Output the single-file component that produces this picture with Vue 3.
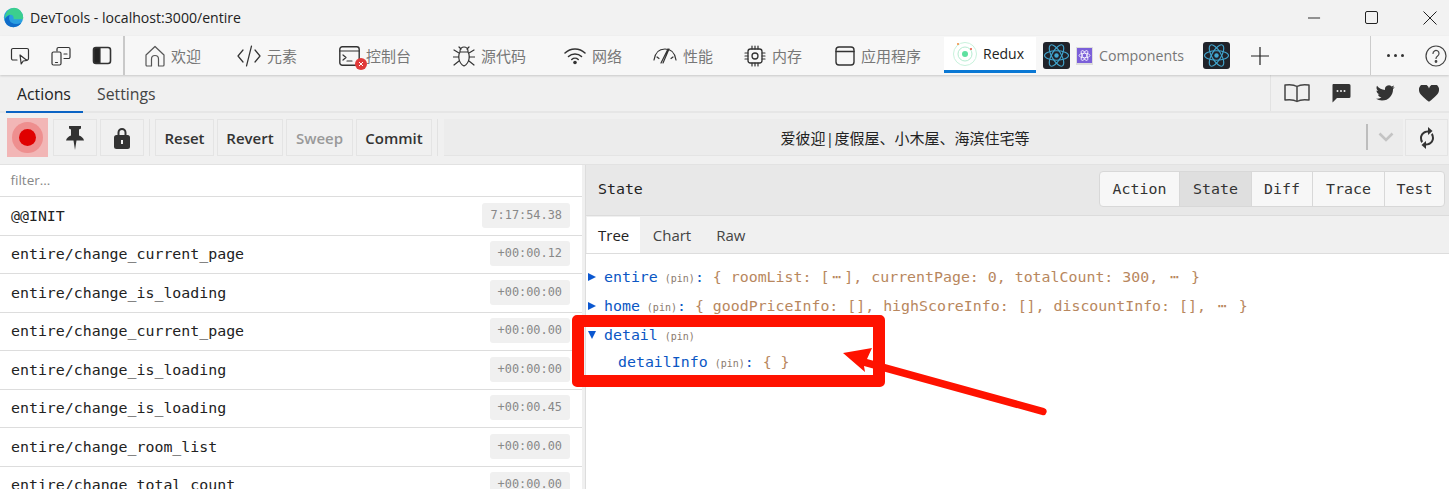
<script setup>
const tabs = [
  { id: 'home', label: '欢迎', w: 92 },
  { id: 'code', label: '元素', w: 102 },
  { id: 'console', label: '控制台', w: 114 },
  { id: 'bug', label: '源代码', w: 111 },
  { id: 'wifi', label: '网络', w: 89 },
  { id: 'gauge', label: '性能', w: 91 },
  { id: 'chip', label: '内存', w: 91 },
  { id: 'app', label: '应用程序', w: 109 }
]
const rows = [
  { name: '@@INIT', time: '7:17:54.38' },
  { name: 'entire/change_current_page', time: '+00:00.12' },
  { name: 'entire/change_is_loading', time: '+00:00:00' },
  { name: 'entire/change_current_page', time: '+00:00.00' },
  { name: 'entire/change_is_loading', time: '+00:00:00' },
  { name: 'entire/change_is_loading', time: '+00:00.45' },
  { name: 'entire/change_room_list', time: '+00:00.00' },
  { name: 'entire/change_total_count', time: '+00:00.00' }
]
const modes = [
  { label: 'Action', w: 79 },
  { label: 'State', w: 72, active: true },
  { label: 'Diff', w: 61 },
  { label: 'Trace', w: 72 },
  { label: 'Test', w: 60 }
]
</script>

<template>
  <div class="page">
    <header class="titlebar">
      <svg class="edge" viewBox="0 0 24 24" width="21" height="21">
        <circle cx="12" cy="12" r="11" fill="#2a9fe0" />
        <path d="M12 1A11 11 0 0 1 23 13v1H12c1-4-2-6-5-5-3 1-4 3-5 5C2 7 6 1 12 1z" fill="#3bcf8e" />
        <path d="M2 14c0 6 5 9 10 9 4 0 7-2 9-5-4 2-8 2-11 0-3-2-4-6-2-9-3 1-5 3-6 5z" fill="#0f6cc9" />
      </svg>
      <span class="title">DevTools - localhost:3000/entire</span>
      <div class="winbtns">
        <svg viewBox="0 0 14 14" width="14" height="14"><path d="M0 7h13" stroke="#222" stroke-width="1" fill="none" /></svg>
        <svg viewBox="0 0 14 14" width="14" height="14"><rect x=".5" y=".5" width="12" height="12" rx="1.5" stroke="#222" fill="none" /></svg>
        <svg viewBox="0 0 14 14" width="14" height="14"><path d="M.5.5l13 13M13.5.5l-13 13" stroke="#222" fill="none" /></svg>
      </div>
    </header>

    <nav class="tabbar">
      <div class="tools">
        <svg viewBox="0 0 20 20" width="20" height="20" class="ic"><path d="M7 14H3a1.5 1.5 0 0 1-1.500-1.500V4A1.500 1.500 0 0 1 3 2.500h14A1.500 1.500 0 0 1 18.500 4v8.500A1.500 1.500 0 0 1 17 14h-1" /><path d="M10 9l1.200 9 2-3 3.800-.5z" /></svg>
        <svg viewBox="0 0 20 20" width="20" height="20" class="ic"><path d="M6 5V3a1.500 1.500 0 0 1 1.500-1.500h10A1.500 1.500 0 0 1 19 3v8a1.500 1.500 0 0 1-1.500 1.500H13M13 8h3" /><rect x="1" y="6" width="9" height="13" rx="1.500" /><path d="M4.500 16.500h2" /></svg>
        <svg viewBox="0 0 20 20" width="20" height="20" class="ic"><rect x="1.500" y="1.500" width="17" height="16" rx="2.500" stroke-width="1.600" /><path d="M2 3.500A1.500 1.500 0 0 1 3.500 2H8v15H3.500A1.500 1.500 0 0 1 2 15.500z" fill="#222" /></svg>
      </div>
      <div class="tablist">
        <div v-for="t in tabs" :key="t.id" class="tab" :style="{ width: t.w + 'px' }">
          <svg v-if="t.id === 'home'" viewBox="0 0 20 22" width="20" height="22" class="ic grey"><path d="M1 10L10 1.500 19 10v10a1 1 0 0 1-1 1h-4.500v-7a3.500 3.500 0 0 0-7 0v7H2a1 1 0 0 1-1-1z" /></svg>
          <svg v-else-if="t.id === 'code'" viewBox="0 0 24 22" width="24" height="22" class="ic dark"><path d="M6 5L1 11l5 6M18 5l5 6-5 6M14.500 1L9.500 21" /></svg>
          <span v-else-if="t.id === 'console'" class="con">
            <svg viewBox="0 0 21 20" width="21" height="20" class="ic dark"><rect x=".8" y=".8" width="19.400" height="18.400" rx="2.500" stroke-width="1.400" /><path d="M.8 5h19.400M4 9l3 2.500L4 14M8 15h5" /></svg>
            <svg class="err" viewBox="0 0 12 12" width="12" height="12"><circle cx="6" cy="6" r="6" fill="#e03a3a" /><path d="M4 4l4 4M8 4l-4 4" stroke="#fff" fill="none" /></svg>
          </span>
          <svg v-else-if="t.id === 'bug'" viewBox="0 0 22 22" width="22" height="22" class="ic dark"><path d="M7 6a4 4 0 0 1 8 0v1H7zM7 7h8c2 3 2 11-4 14C5 18 5 10 7 7zM6 2l2 2M16 2l-2 2M1 5l5 3M21 5l-5 3M0 12h6M22 12h-6M1 20l5-4M21 20l-5-4" /></svg>
          <svg v-else-if="t.id === 'wifi'" viewBox="0 0 22 18" width="22" height="18" class="ic dark"><path d="M1 6c5.500-5.500 14.500-5.500 20 0M4.500 9.500c3.500-3.500 9.500-3.500 13 0M7.800 12.500c1.800-1.600 4.600-1.600 6.400 0" stroke-width="1.500" /><circle cx="11" cy="15.500" r="1.800" fill="#333" stroke="none" /></svg>
          <svg v-else-if="t.id === 'gauge'" viewBox="0 0 24 18" width="24" height="18" class="ic dark"><path d="M1 13C2 6 6 2 12 2c6 0 10 4 11 11M4 10l2 1.500M20 10l-2 1.500M8 16l7-14M10 16l6-14" /></svg>
          <svg v-else-if="t.id === 'chip'" viewBox="0 0 22 22" width="22" height="22" class="ic dark"><rect x="4" y="4" width="14" height="14" rx="2.500" stroke-width="1.300" /><circle cx="11" cy="11" r="3" stroke-width="1.300" /><path d="M8 1v3M11 1v3M14 1v3M8 18v3M11 18v3M14 18v3M1 8h3M1 11h3M1 14h3M18 8h3M18 11h3M18 14h3" /></svg>
          <svg v-else viewBox="0 0 20 20" width="20" height="20" class="ic dark"><rect x="1" y="1" width="18" height="18" rx="3" stroke-width="1.400" /><path d="M1 5.500h18" stroke-width="1.400" /></svg>
          <span class="tablabel">{{ t.label }}</span>
        </div>
        <div class="tab redux">
          <svg viewBox="0 0 24 24" width="24" height="24">
            <circle cx="12" cy="12" r="11.500" fill="none" stroke="#c8f2dc" />
            <circle cx="12" cy="12" r="7" fill="none" stroke="#b5ecd0" />
            <circle cx="12" cy="12" r="3" fill="#5fe0a0" />
            <circle cx="5" cy="2" r="1" fill="#f08a3c" />
            <circle cx="18" cy="7" r="1" fill="#e8503c" />
          </svg>
          <span>Redux</span>
        </div>
        <svg class="rct first" viewBox="0 0 27 27" width="27" height="27">
          <rect width="27" height="27" rx="3" fill="#20232a" />
          <g fill="none" stroke="#41a6cf" stroke-width="1.100">
            <ellipse cx="13.500" cy="13.500" rx="12" ry="4.700" />
            <ellipse cx="13.500" cy="13.500" rx="12" ry="4.700" transform="rotate(60 13.500 13.500)" />
            <ellipse cx="13.500" cy="13.500" rx="12" ry="4.700" transform="rotate(120 13.500 13.500)" />
          </g>
          <circle cx="13.500" cy="13.500" r="2.200" fill="#41a6cf" />
        </svg>
        <svg class="purple" viewBox="0 0 17 18" width="17" height="18">
          <rect width="17" height="18" fill="#dcdcdc" />
          <rect x="1" y="1" width="15" height="15" fill="#7b5fd9" />
          <g fill="none" stroke="#fff" stroke-width=".8">
            <ellipse cx="8.500" cy="8.500" rx="5.500" ry="2.200" />
            <ellipse cx="8.500" cy="8.500" rx="5.500" ry="2.200" transform="rotate(60 8.500 8.500)" />
            <ellipse cx="8.500" cy="8.500" rx="5.500" ry="2.200" transform="rotate(120 8.500 8.500)" />
          </g>
        </svg>
        <span class="tablabel comp">Components</span>
        <svg class="rct" viewBox="0 0 27 27" width="27" height="27">
          <rect width="27" height="27" rx="3" fill="#20232a" />
          <g fill="none" stroke="#41a6cf" stroke-width="1.100">
            <ellipse cx="13.500" cy="13.500" rx="12" ry="4.700" />
            <ellipse cx="13.500" cy="13.500" rx="12" ry="4.700" transform="rotate(60 13.500 13.500)" />
            <ellipse cx="13.500" cy="13.500" rx="12" ry="4.700" transform="rotate(120 13.500 13.500)" />
          </g>
          <circle cx="13.500" cy="13.500" r="2.200" fill="#41a6cf" />
        </svg>
        <svg class="plus" viewBox="0 0 18 18" width="18" height="18"><path d="M9 0v18M0 9h18" stroke="#222" stroke-width="1.200" /></svg>
      </div>
      <div class="tabend">
        <span class="dots"><i></i><i></i><i></i></span>
        <svg viewBox="0 0 22 22" width="22" height="22" class="ic grey2"><circle cx="11" cy="11" r="10" /><path d="M8 8.500a3 3 0 1 1 4.600 2.500c-1 .7-1.600 1.300-1.600 2.500" /><circle cx="11" cy="16.500" r=".8" fill="#444" /></svg>
      </div>
    </nav>

    <div class="subtabs">
      <div class="subtab on">Actions</div>
      <div class="subtab second">Settings</div>
      <div class="links">
        <svg viewBox="0 0 26 20" width="26" height="20" class="ic link"><path d="M13 3.500C10 1.500 5 1.500 1 2v15c4-.5 9-.5 12 1.500 3-2 8-2 12-1.500V2c-4-.5-9-.5-12 1.500zM13 3.500v15" stroke-width="1.500" /></svg>
        <svg class="lk2 solid" viewBox="0 0 20 20" width="20" height="20"><path d="M2 1h16a1.500 1.500 0 0 1 1.500 1.500v11A1.500 1.500 0 0 1 18 15H6l-4.500 4.500V2.500A1.500 1.500 0 0 1 2 1z" /><circle cx="6.500" cy="8" r="1" fill="#f0f0f0" /><circle cx="10" cy="8" r="1" fill="#f0f0f0" /><circle cx="13.500" cy="8" r="1" fill="#f0f0f0" /></svg>
        <svg class="lk3 solid" viewBox="0 0 24 20" width="19" height="16"><path d="M23.500 2.400c-.9.400-1.800.7-2.800.8 1-.6 1.800-1.500 2.100-2.700-.9.600-2 1-3.100 1.200A4.900 4.900 0 0 0 11.400 6.200C7.300 6 3.700 4 1.300.9c-1.300 2.300-.6 5.100 1.500 6.600-.8 0-1.500-.2-2.200-.6 0 2.400 1.700 4.400 3.900 4.900-.7.200-1.500.2-2.200.1.600 2 2.400 3.400 4.600 3.400A9.900 9.900 0 0 1 0 17.300 13.900 13.900 0 0 0 7.500 19.500c9.100 0 14.300-7.700 14-14.600 1-.7 1.800-1.500 2-2.500z" /></svg>
        <svg class="lk4 solid" viewBox="0 0 24 20" width="20" height="17"><path d="M12 20C5 14 0 10.500 0 6a6 6 0 0 1 12-2 6 6 0 0 1 12 2c0 4.500-5 8-12 14z" /></svg>
      </div>
    </div>

    <div class="toolbar">
      <div class="rec"><span class="halo"><span class="dot"></span></span></div>
      <div class="btn icon">
        <svg viewBox="0 0 20 24" width="20" height="24" class="solid"><path d="M4 0h12v2.500l-2 1v6c2.500 1 4.500 2.500 5 5H11.500L10 24l-1.500-9.500H1c.5-2.500 2.500-4 5-5v-6l-2-1z" /></svg>
      </div>
      <div class="btn icon">
        <svg viewBox="0 0 16 22" width="16" height="22" class="solid"><path d="M3.500 9V5.500a4.500 4.500 0 0 1 9 0V9h-2V5.500a2.500 2.500 0 0 0-5 0V9z" /><rect y="8" width="16" height="14" rx="2.500" /><rect x="7" y="13" width="2" height="4" fill="#f0f0f0" /></svg>
      </div>
      <span class="sep"></span>
      <div class="btn reset">Reset</div>
      <div class="btn revert">Revert</div>
      <div class="btn sweep">Sweep</div>
      <div class="btn commit">Commit</div>
      <span class="sep last"></span>
      <div class="picker">
        <span class="pagetitle">爱彼迎 | 度假屋、小木屋、海滨住宅等</span>
        <span class="pbar"></span>
        <svg viewBox="0 0 16 10" width="16" height="10"><path d="M1.500 1.500L8 8l6.500-6.500" stroke="#c4c4c4" stroke-width="2.600" fill="none" /></svg>
      </div>
      <div class="sync">
        <svg viewBox="0 0 16 22" width="16" height="22" class="solid"><path d="M9 0l4.500 4L9 8V5.500C5.500 5.500 3 8 3 11c0 1.200.3 2.200 1 3.200L2.500 16A8 8 0 0 1 1 11c0-4 3.500-7.500 8-7.500zM7 22l-4.500-4L7 14v2.500c3.500 0 6-2.500 6-5.500 0-1.200-.3-2.200-1-3.200L13.500 6A8 8 0 0 1 15 11c0 4-3.500 7.500-8 7.500z" /></svg>
      </div>
    </div>

    <main class="main">
      <section class="left">
        <div class="filter">filter...</div>
        <div v-for="(r, i) in rows" :key="i" class="row">
          <span class="rowname">{{ r.name }}</span>
          <span class="time">{{ r.time }}</span>
        </div>
      </section>
      <section class="right">
        <div class="righthead">
          <span class="statelabel">State</span>
          <div class="modes">
            <div v-for="m in modes" :key="m.label" class="mode" :class="{ active: m.active }" :style="{ width: m.w + 'px' }">{{ m.label }}</div>
          </div>
        </div>
        <div class="viewtabs">
          <div class="vt on">Tree</div>
          <div class="vt">Chart</div>
          <div class="vt">Raw</div>
        </div>
        <div class="tree">
          <div class="line"><i class="tri"></i><b>entire</b> <small>(pin)</small><b>:</b> <em>{ roomList: [<u>⋯</u>], currentPage: 0, totalCount: 300, <u>⋯</u> }</em></div>
          <div class="line"><i class="tri"></i><b>home</b> <small>(pin)</small><b>:</b> <em>{ goodPriceInfo: [], highScoreInfo: [], discountInfo: [], <u>⋯</u> }</em></div>
          <div class="line open"><i class="tri down"></i><b>detail</b> <small>(pin)</small></div>
          <div class="line child"><b>detailInfo</b> <small>(pin)</small><b>:</b> <em>{ }</em></div>
        </div>
      </section>
    </main>

    <div class="markbox"></div>
    <svg class="markarrow" viewBox="0 0 240 80" width="240" height="80">
      <path d="M23 8L52 3 47 14 224 63a3.500 3.500 0 0 1-2 7L44 21 45 27z" fill="#ff1200" />
    </svg>
  </div>
</template>

<style>
html, body { margin: 0; height: 100%; overflow: hidden; background: #f0f0f0; }
</style>

<style scoped>
.page {
  position: relative;
  width: 1449px;
  height: 489px;
  overflow: hidden;
  background: #f0f0f0;
  color: #222;
  font-family: "Open Sans", "Noto Sans CJK SC", sans-serif;
  --mono: "DejaVu Sans Mono", "Noto Sans CJK SC", monospace;
}
.ic { fill: none; stroke: #333; stroke-width: 1.200; stroke-linecap: round; stroke-linejoin: round; flex: none; }
.ic.grey { stroke: #555; }
.ic.dark { stroke: #333; }
.ic.grey2 { stroke: #444; }
.ic.link { stroke: #444; }
.solid { fill: #333; flex: none; }

.titlebar { height: 36px; display: flex; align-items: center; background: #f2f2f2; }
.edge { margin-left: 3px; margin-top: -2px; }
.title { margin-left: 6px; font-size: 14.100px; margin-top: -1px; }
.winbtns { margin-left: auto; display: flex; gap: 44px; margin-right: 12px; align-items: center; }
.winbtns svg:first-child { width: 13px; }

.tabbar {
  height: 39px;
  display: flex;
  align-items: center;
  background: #f7f7f7;
  box-shadow: 0 1px 2px rgba(0,0,0,.16);
  position: relative;
  z-index: 1;
}
.tools {
  display: flex;
  align-items: center;
  gap: 21px;
  width: 113px;
  padding-left: 10px;
  height: 100%;
  border-right: 2px solid #c9c9c9;
  flex: none;
}
.tablist { display: flex; align-items: center; height: 100%; padding-left: 20px; flex: none; width: 1224px; }
.tab { display: flex; align-items: center; gap: 6px; height: 100%; flex: none; }
.tablabel { font-size: 15px; color: #777; }
.con { position: relative; display: flex; }
.err { position: absolute; left: 16px; top: 12px; }
.redux {
  width: 92px;
  height: 36px;
  margin-top: 1px;
  align-self: flex-start;
  background: #fff;
  border-bottom: 3px solid #0a78d4;
  box-sizing: border-box;
  padding-left: 9px;
  font-size: 14px;
  color: #222;
  gap: 6px;
}
.rct { margin-left: 0; flex: none; }
.rct.first { margin-left: 7px; }
.purple { margin-left: 6px; flex: none; }
.comp { margin-left: 6px; width: 104px; font-size: 14.200px; }
.plus { margin-left: 21px; flex: none; }
.tabend {
  flex: none;
  display: flex;
  align-items: center;
  height: 100%;
  margin-left: 1px;
  border-left: 1px solid #ccc;
  padding-left: 16px;
  gap: 20px;
}
.dots { display: flex; gap: 4px; width: 18px; }
.dots i { width: 3px; height: 3px; border-radius: 50%; background: #333; }

.subtabs { display: flex; position: relative; border-bottom: 2px solid #e6e6e6; height: 36px; padding-left: 6px; }
.subtab { font-size: 15.800px; padding: 0 11px; line-height: 38px; color: #444; height: 36px; box-sizing: border-box; }
.subtab.second { padding-left: 14px; }
.subtab.on { color: #222; width: 77px; border-bottom: 2px solid #0a63c4; height: 38px; }
.links {
  margin-left: auto;
  width: 179px;
  display: flex;
  align-items: center;
  border-left: 1px solid #e2e2e2;
  padding-left: 13px;
  box-sizing: border-box;
  height: 100%;
}
.lk2 { margin-left: 21px; }
.lk3 { margin-left: 25px; }
.lk4 { margin-left: 24px; }

.toolbar {
  height: 52px;
  display: flex;
  align-items: center;
  gap: 3px;
  padding: 0 0 2px 7px;
  box-sizing: border-box;
  border-bottom: 1px solid #e2e2e2;
}
.rec { width: 41px; height: 39px; background: #f2b6b6; display: flex; align-items: center; justify-content: center; }
.halo { width: 31px; height: 31px; border-radius: 50%; background: #ee8f8f; display: flex; align-items: center; justify-content: center; }
.dot { width: 17px; height: 17px; border-radius: 50%; background: #e00000; }
.btn {
  height: 37px;
  box-sizing: border-box;
  border: 1px solid #e4e4e4;
  display: flex;
  align-items: center;
  justify-content: center;
  font-size: 15px;
  font-weight: 600;
  color: #333;
}
.btn.icon { width: 44px; }
.rec + .btn { margin-left: 2px; }
.reset { width: 59px; }
.revert { width: 66px; }
.sweep { width: 67px; color: #999; }
.commit { width: 76px; }
.sep { width: 1px; height: 37px; background: #e2e2e2; margin: 0 2px; }
.sep.last { margin: 0 3px 0 2px; }
.picker {
  width: 959px;
  height: 37px;
  background: #ececec;
  border-bottom: 1px solid #e4e4e4;
  box-sizing: border-box;
  display: flex;
  align-items: center;
  position: relative;
  flex: none;
}
.pagetitle { width: 922px; text-align: center; font-size: 15px; word-spacing: -3.500px; flex: none; color: #222; }
.pbar { width: 2px; height: 26px; background: #bdbdbd; flex: none; margin-right: 10px; }
.sync { width: 43px; height: 37px; flex: none; margin-left: -1px; border: 1px solid #e4e4e4; box-sizing: border-box; display: flex; align-items: center; justify-content: center; }

.main { display: flex; height: 324px; }
.left { width: 582px; background: #fff; flex: none; overflow: hidden; }
.filter { height: 31.300px; line-height: 31px; padding-left: 10.500px; font-size: 13.500px; color: #888; border-bottom: 1px solid #ddd; }
.row {
  height: 38.500px;
  box-sizing: border-box;
  border-bottom: 1px solid #ddd;
  display: flex;
  justify-content: space-between;
  align-items: flex-start;
  padding: 5.500px 12px 0 11px;
  font-family: var(--mono);
}
.rowname { font-size: 14.900px; line-height: 27px; color: #222; }
.time { background: #f0f0f0; border-radius: 3px; height: 25px; line-height: 25px; padding: 0 8px; font-size: 11.900px; color: #888; }
.right { flex: none; width: 864px; margin-left: 3px; background: #fff; border-left: 1px solid #ddd; box-sizing: border-box; }
.righthead {
  height: 51px;
  background: #e8e8e8;
  border-bottom: 1px solid #dcdcdc;
  box-sizing: border-box;
  display: flex;
  align-items: center;
  justify-content: space-between;
  padding: 0 4px 2px 12px;
  font-family: var(--mono);
  font-size: 14.900px;
}
.modes { display: flex; height: 36px; border: 1px solid #d8d8d8; border-radius: 4px; background: #f7f7f7; overflow: hidden; box-sizing: border-box; }
.mode { display: flex; align-items: center; justify-content: center; box-sizing: border-box; border-left: 1px solid #d8d8d8; color: #333; }
.mode:first-child { border-left: 0; }
.mode.active { background: #dfdfdf; }
.viewtabs { height: 38px; display: flex; background: #f0f0f0; border-bottom: 1px solid #ddd; box-sizing: border-box; padding-left: 1px; align-items: flex-end; }
.vt { font-size: 15px; padding: 0 12.500px; height: 35px; line-height: 34px; color: #444; }
.vt.on { background: #fff; height: 36px; color: #222; padding: 0 11px; line-height: 36px; }
.tree { padding: 9px 0 0 2px; font-family: var(--mono); font-size: 14.900px; }
.line { height: 29px; line-height: 29px; white-space: nowrap; position: relative; padding-left: 16px; }
.line.open { height: 28px; }
.line.child { height: 27px; line-height: 27px; padding-left: 30px; }
.line b { font-weight: 400; color: #0b57c4; }
.line small { font-size: 10px; color: #8a7a6e; margin-left: -2px; }
.line em { font-style: normal; color: #b8875e; }
.line u { display: inline-block; width: 15px; text-align: center; text-decoration: none; }
.tri { position: absolute; left: 0; top: 10px; width: 0; height: 0; border-left: 8px solid #0b57d0; border-top: 4.500px solid transparent; border-bottom: 4.500px solid transparent; }
.tri.down { border-top: 8px solid #0b57d0; border-left: 4.500px solid transparent; border-right: 4.500px solid transparent; border-bottom: 0; }

.markbox { position: absolute; left: 572px; top: 315px; width: 313px; height: 72px; box-sizing: border-box; border: 12px solid #ff1200; border-radius: 5px; z-index: 3; }
.markarrow { position: absolute; left: 820px; top: 345px; z-index: 4; }
</style>
